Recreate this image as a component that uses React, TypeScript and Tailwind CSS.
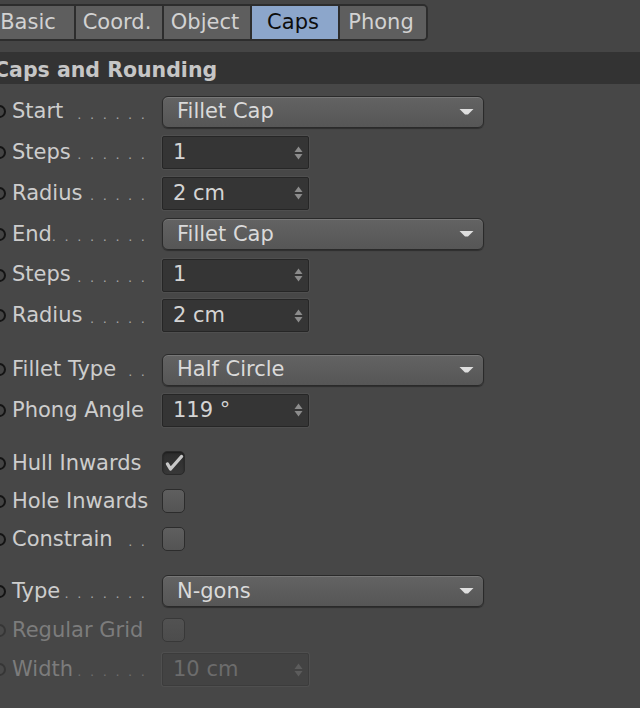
import React from "react";

const FONT = "font-['DejaVu_Sans',sans-serif]";

function Radio({ disabled }: { disabled?: boolean }) {
  return (
    <span
      className={`shrink-0 ml-[-7px] w-[13px] h-[13px] rounded-full border-2 ${
        disabled ? "border-[#363636] bg-[#4a4a4a]" : "border-[#141414] bg-[#444444]"
      }`}
    />
  );
}

function Label({ text, dots = 0, disabled }: { text: string; dots?: number; disabled?: boolean }) {
  return (
    <div className="flex items-center w-[148px] mr-[14px] shrink-0">
      <Radio disabled={disabled} />
      <span
        className={`ml-[6px] whitespace-nowrap shrink-0 ${disabled ? "text-[#7c7c7c]" : "text-[#cdcdcd]"}`}
      >
        {text}
      </span>
      {dots > 0 && (
        <div className="flex-1 min-w-0 flex justify-end self-end mb-[7px]">
          <span
            className={`shrink-0 whitespace-nowrap text-[13px] leading-none tracking-[8.6px] mr-[-5.6px] ${
              disabled ? "text-[#6e6e6e]" : "text-[#a6a6a6]"
            }`}
          >
            {".".repeat(dots)}
          </span>
        </div>
      )}
    </div>
  );
}

function Dropdown({ value }: { value: string }) {
  return (
    <div className="w-[322px] h-[32px] rounded-[6px] border border-[#2a2a2a] bg-gradient-to-b from-[#636363] to-[#565656] shadow-[inset_0_1px_0_rgba(255,255,255,0.13),0_1px_1px_rgba(0,0,0,0.35)] flex items-center justify-between pl-[14px] pr-[9px] text-[#dadada]">
      <span className="whitespace-nowrap">{value}</span>
      <svg width="15" height="8" viewBox="0 0 15 8">
        <path d="M0.5 1 H14.5 L9 6.5 H6 Z" fill="#dedede" />
      </svg>
    </div>
  );
}

function NumInput({ value, disabled }: { value: string; disabled?: boolean }) {
  return (
    <div
      className={`w-[147px] h-[33px] rounded-[2px] border flex items-center justify-between pl-[10px] pr-[5px] shadow-[0_0_0_1px_#4f4f4f] ${
        disabled
          ? "border-[#3c3c3c] bg-[#434343] text-[#6c6c6c]"
          : "border-[#262626] bg-[#353535] text-[#d4d4d4]"
      }`}
    >
      <span className="whitespace-nowrap">{value}</span>
      <svg width="9" height="16" viewBox="0 0 9 16">
        <path d="M0.5 7 L4.5 1.5 L8.5 7 Z" fill={disabled ? "#5c5c5c" : "#8c8c8c"} />
        <path d="M0.5 9 L4.5 14.5 L8.5 9 Z" fill={disabled ? "#5c5c5c" : "#8c8c8c"} />
      </svg>
    </div>
  );
}

function Check({ checked, disabled }: { checked?: boolean; disabled?: boolean }) {
  return (
    <div
      className={`w-[23px] h-[24px] rounded-[5px] border flex items-center justify-center ${
        checked
          ? "border-[#2a2a2a] bg-gradient-to-b from-[#2c2c2c] to-[#383838] shadow-[inset_0_1px_2px_rgba(0,0,0,0.4)]"
          : disabled
          ? "border-[#383838] bg-gradient-to-b from-[#525252] to-[#4c4c4c]"
          : "border-[#2c2c2c] bg-gradient-to-b from-[#5f5f5f] to-[#545454]"
      }`}
    >
      {checked && (
        <svg width="20" height="18" viewBox="0 0 20 18">
          <path
            d="M3.5 10 L6.5 15 L17.5 2.5"
            stroke="#c8c8c8"
            strokeWidth="3.4"
            fill="none"
            strokeLinecap="round"
            strokeLinejoin="round"
          />
        </svg>
      )}
    </div>
  );
}

function Row({ h, children }: { h: string; children: React.ReactNode }) {
  return <div className={`flex items-center ${h}`}>{children}</div>;
}

const tabs = ["Basic", "Coord.", "Object", "Caps", "Phong"];

export default function App() {
  return (
    <div className={`${FONT} text-[21px] w-[640px] h-[708px] overflow-hidden bg-[#474747]`}>
      {/* Tab bar */}
      <div className="pt-[4px] h-[52px] bg-[#454545]">
        <div className="ml-[-16px] flex w-max border-2 border-[#2d2d2d] rounded-r-[5px] overflow-hidden h-[37px]">
          {tabs.map((t, i) => (
            <div
              key={t}
              className={`w-[88px] flex items-center justify-center pr-[4px] ${
                i > 0 ? "border-l-2 border-[#2d2d2d]" : ""
              } ${t === "Caps" ? "bg-[#8ca6cb] text-[#0d0d0d]" : "bg-[#5e5e5e] text-[#d2d2d2]"}`}
            >
              {t}
            </div>
          ))}
        </div>
      </div>

      {/* Section header */}
      <div className="h-[32px] bg-[#333333] flex items-center pt-[4px]">
        <span className="ml-[-6px] font-bold text-[20.5px] text-[#c6c6c6] whitespace-nowrap">
          Caps and Rounding
        </span>
      </div>

      <div className="pt-[7.5px] flex flex-col">
        <Row h="h-[40.8px]">
          <Label text="Start" dots={6} />
          <Dropdown value="Fillet Cap" />
        </Row>
        <Row h="h-[40.8px]">
          <Label text="Steps" dots={6} />
          <NumInput value="1" />
        </Row>
        <Row h="h-[40.8px]">
          <Label text="Radius" dots={5} />
          <NumInput value="2 cm" />
        </Row>
        <Row h="h-[40.8px]">
          <Label text="End" dots={8} />
          <Dropdown value="Fillet Cap" />
        </Row>
        <Row h="h-[40.8px]">
          <Label text="Steps" dots={6} />
          <NumInput value="1" />
        </Row>
        <Row h="h-[40.8px]">
          <Label text="Radius" dots={5} />
          <NumInput value="2 cm" />
        </Row>

        <div className="h-[13px]" />
        <Row h="h-[40.8px]">
          <Label text="Fillet Type" dots={2} />
          <Dropdown value="Half Circle" />
        </Row>
        <Row h="h-[40.8px]">
          <Label text="Phong Angle" />
          <NumInput value="119 °" />
        </Row>

        <div className="h-[13.5px]" />
        <Row h="h-[38px]">
          <Label text="Hull Inwards" />
          <Check checked />
        </Row>
        <Row h="h-[38px]">
          <Label text="Hole Inwards" />
          <Check />
        </Row>
        <Row h="h-[38px]">
          <Label text="Constrain" dots={2} />
          <Check />
        </Row>

        <div className="h-[12.5px]" />
        <Row h="h-[40.8px]">
          <Label text="Type" dots={7} />
          <Dropdown value="N-gons" />
        </Row>
        <Row h="h-[37.5px]">
          <Label text="Regular Grid" disabled />
          <Check disabled />
        </Row>
        <Row h="h-[40.8px]">
          <Label text="Width" dots={6} disabled />
          <NumInput value="10 cm" disabled />
        </Row>
      </div>
    </div>
  );
}
